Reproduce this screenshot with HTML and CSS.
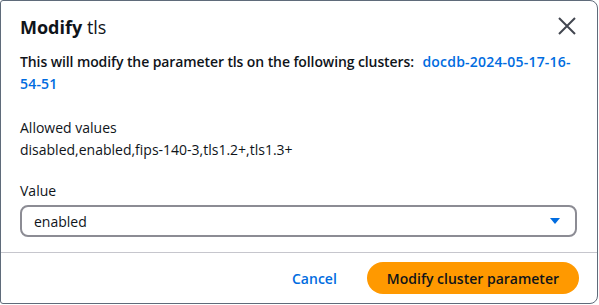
FILE: index.html
```html
<!DOCTYPE html>
<html lang="en">
<head>
  <meta charset="UTF-8">
  <title>Modify tls</title>
  <link rel="stylesheet" href="styles.css">
</head>
<body>

<div class="modal">
  <div class="modal-header">
    <h2 class="modal-title"><b>Modify</b> tls</h2>
    <button class="close-btn" aria-label="Close">
      <svg width="20" height="20" viewBox="0 0 20 20">
        <path d="M2 2 L18 18 M18 2 L2 18" stroke="#424650" stroke-width="2" fill="none"/>
      </svg>
    </button>
  </div>

  <div class="modal-body">
    <p class="notice">This will modify the parameter tls on the following clusters: <a href="#" class="link">docdb-2024-05-17-16-54-51</a></p>

    <div class="field">
      <div class="label">Allowed values</div>
      <div class="value">disabled,enabled,fips-140-3,tls1.2+,tls1.3+</div>
    </div>

    <div class="field">
      <div class="label">Value</div>
      <div class="select">
        <span>enabled</span>
        <svg width="12" height="8" viewBox="0 0 12 8"><path d="M1 1 L11 1 L6 7 Z" fill="#006ce0"/></svg>
      </div>
    </div>
  </div>

  <div class="modal-footer">
    <a href="#" class="cancel">Cancel</a>
    <button class="primary">Modify cluster parameter</button>
  </div>
</div>

</body>
</html>
```

FILE: styles.css
```css
body {
  margin: 0;
  font-family: "Open Sans", "Noto Sans", sans-serif;
  color: #0f141a;
  background: #fff;
}

.modal {
  width: 596px;
  height: 302px;
  border: 1px solid #5f6b7a;
  border-radius: 3px 8px 8px 3px;
  display: flex;
  flex-direction: column;
  box-sizing: content-box;
}

.modal-header {
  display: flex;
  justify-content: space-between;
  align-items: flex-start;
  padding: 14px 20px 0 19px;
}

.modal-title {
  margin: 0;
  font-size: 18px;
  font-weight: normal;
  line-height: 24px;
}

.modal-title b {
  font-weight: 700;
}

.close-btn {
  border: none;
  background: none;
  padding: 0;
  margin-top: 1px;
  cursor: pointer;
}

.modal-body {
  padding: 0 20px 0 19px;
}

.notice {
  margin: 12px 0 0;
  font-size: 14px;
  font-weight: 600;
  line-height: 22px;
  letter-spacing: -0.1px;
}

.link {
  color: #006ce0;
  text-decoration: none;
  margin-left: 5px;
  letter-spacing: 0.2px;
}

.field {
  margin-top: 22px;
  font-size: 14px;
}

.field + .field {
  margin-top: 19px;
}

.label {
  line-height: 22px;
}

.value {
  line-height: 22px;
}

.select {
  margin-top: 3px;
  height: 28px;
  border: 2px solid #8c8c94;
  border-radius: 8px;
  display: flex;
  align-items: center;
  justify-content: space-between;
  padding: 0 14px 0 12px;
}

.modal-footer {
  margin-top: auto;
  border-top: 1px solid #c6c6cd;
  height: 50px;
  display: flex;
  align-items: center;
  justify-content: flex-end;
  padding: 0 18px 0 20px;
  gap: 30px;
}

.cancel {
  color: #006ce0;
  font-weight: 600;
  font-size: 14px;
  text-decoration: none;
}

.primary {
  background: #ff9900;
  color: #0f141a;
  border: none;
  border-radius: 16px;
  height: 32px;
  padding: 0 20px;
  font-family: inherit;
  font-weight: 600;
  font-size: 14px;
}
```
